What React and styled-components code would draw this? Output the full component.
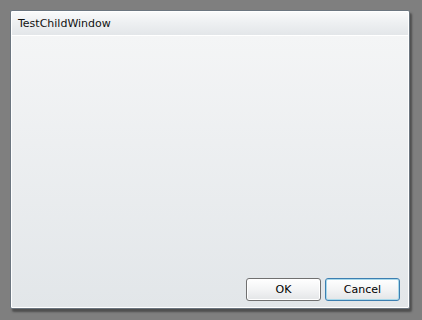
import React from 'react';
import styled, { createGlobalStyle } from 'styled-components';

const Global = createGlobalStyle`
  html, body {
    margin: 0;
    padding: 0;
    background: #7f7f7f;
  }
`;

const Backdrop = styled.div`
  width: 422px;
  height: 320px;
  background: #7f7f7f;
  padding: 10px 0 0 10px;
  box-sizing: border-box;
`;

const Window = styled.div`
  width: 400px;
  height: 299px;
  box-sizing: border-box;
  border: 1px solid #6c7680;
  border-radius: 2px;
  background: #fff;
  padding: 1px;
  display: flex;
  flex-direction: column;
  box-shadow: 2px 3px 2px rgba(40, 40, 40, 0.55);
`;

const TitleBar = styled.div`
  height: 23px;
  display: flex;
  align-items: center;
  padding-left: 6px;
  background: linear-gradient(#f9fafb, #eef0f2 45%, #e3e6e9);
  border-bottom: 1px solid #ffffff;
  font-family: 'DejaVu Sans', 'Liberation Sans', sans-serif;
  font-size: 11px;
  color: #111;
`;

const Body = styled.div`
  flex: 1;
  display: flex;
  flex-direction: column;
  justify-content: flex-end;
  background: linear-gradient(#f4f5f6, #e2e6e9);
  padding: 0 8px 6px 0;
`;

const ButtonRow = styled.div`
  display: flex;
  justify-content: flex-end;
  gap: 4px;
`;

const Button = styled.button`
  width: 75px;
  height: 23px;
  box-sizing: border-box;
  border: 1px solid ${(p) => (p.$focused ? '#3c7fb1' : '#707070')};
  border-radius: 3px;
  background: linear-gradient(#ffffff, #f3f4f5 50%, #e3e5e7);
  box-shadow: inset 0 0 0 1px ${(p) => (p.$focused ? '#a8d8ea' : '#ffffff')};
  font-family: 'DejaVu Sans', 'Liberation Sans', sans-serif;
  font-size: 11px;
  color: #000;
  padding: 0;
`;

export default function App() {
  return (
    <Backdrop>
      <Global />
      <Window>
        <TitleBar>TestChildWindow</TitleBar>
        <Body>
          <ButtonRow>
            <Button>OK</Button>
            <Button $focused>Cancel</Button>
          </ButtonRow>
        </Body>
      </Window>
    </Backdrop>
  );
}
